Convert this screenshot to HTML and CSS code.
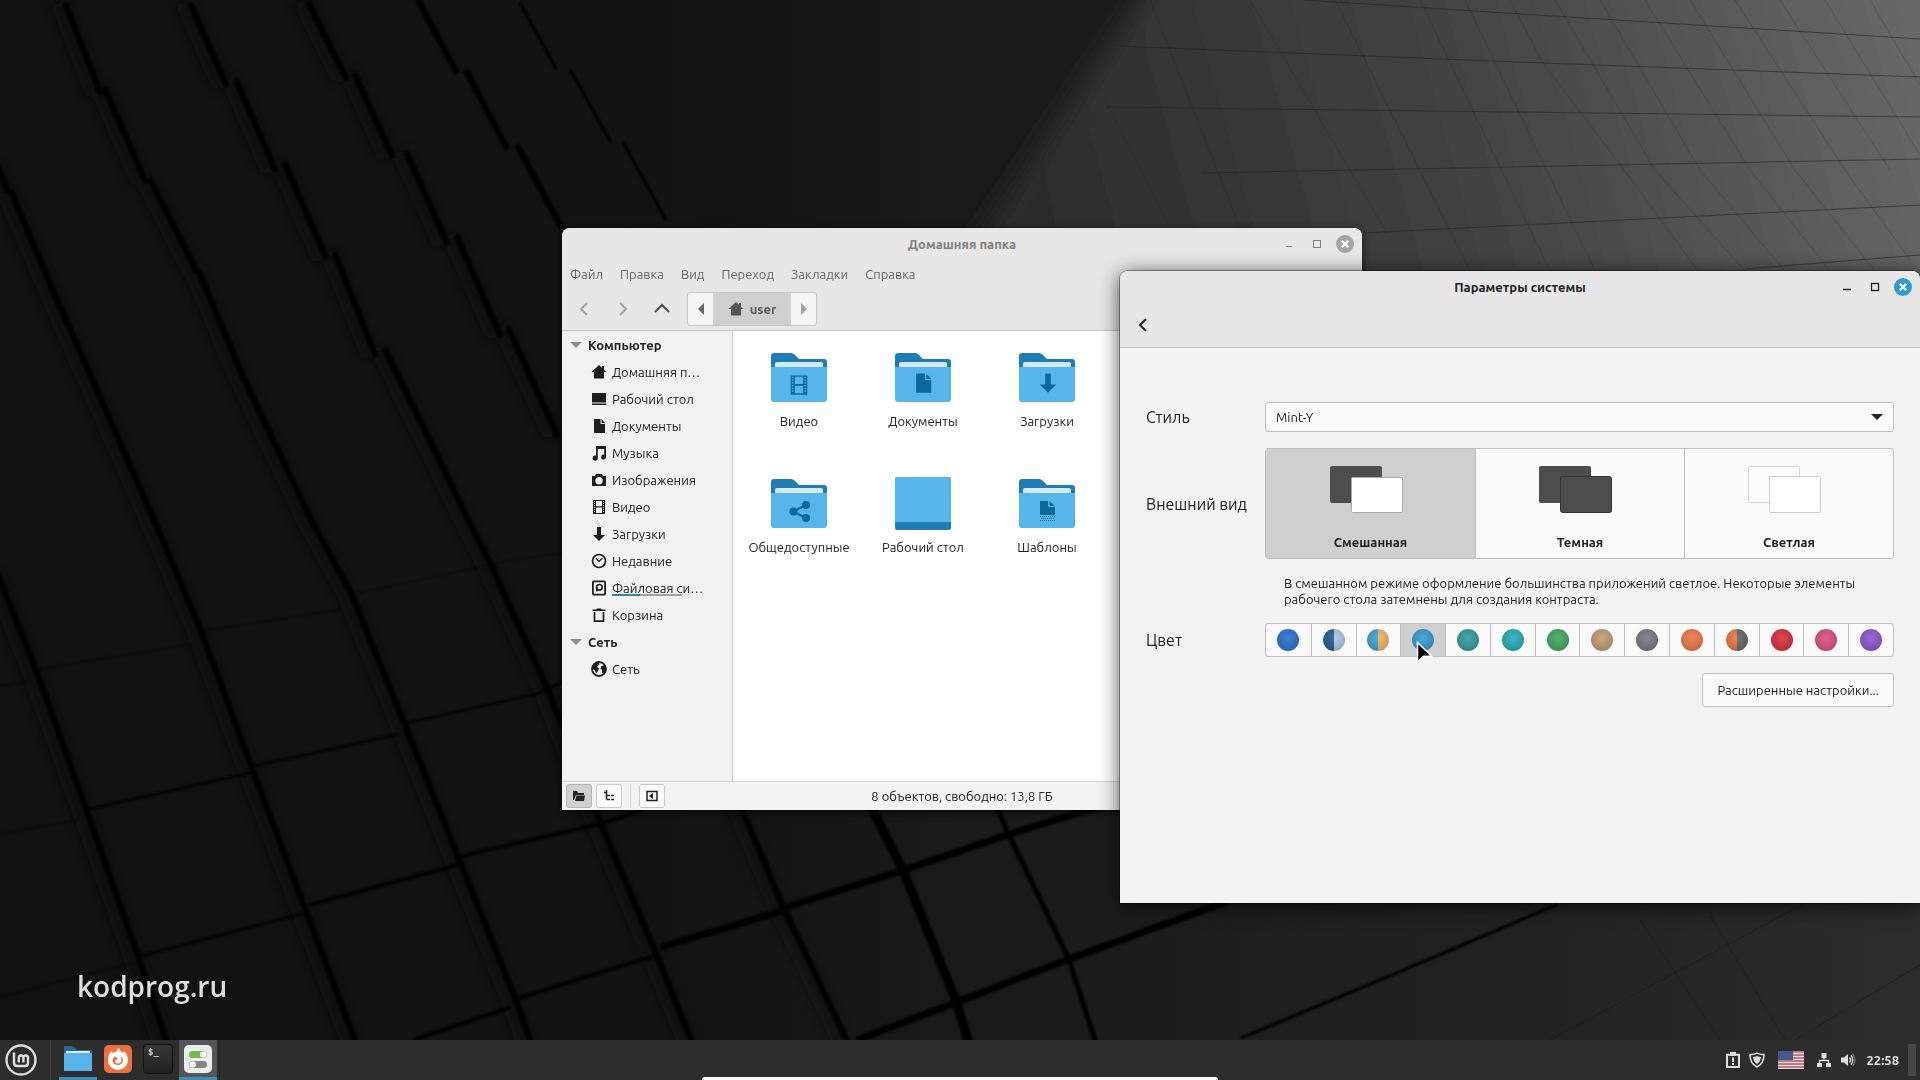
FILE: index.html
```html
<!DOCTYPE html>
<html lang="ru">
<head>
<meta charset="utf-8">
<meta name="viewport" content="width=device-width, initial-scale=1">
<title>Параметры системы</title>
<link rel="stylesheet" href="styles.css">
</head>
<body>
<svg class="defs" aria-hidden="true">
  <defs>
    <symbol id="home" viewBox="0 0 16 16"><path d="M8 1 .5 8H3v6.500h10V8h2.500L13 5.700V2h-2v1.800z"/></symbol>
    <symbol id="screen" viewBox="0 0 16 16"><path d="M1 2h14v9.500H1zM1 12.500h14V14H1z"/></symbol>
    <symbol id="doc" viewBox="0 0 16 16"><path d="M3 1h6.500v5H14v9H3zM10.500 1 14 5h-3.500z"/></symbol>
    <symbol id="music" viewBox="0 0 16 16"><path d="M5 1h10v11a2.400 2.400 0 1 1-1.800-2.300V4H6.800v9a2.600 2.600 0 1 1-1.800-2.400z"/></symbol>
    <symbol id="camera" viewBox="0 0 16 16"><path fill-rule="evenodd" d="M1 4h3l1-2h6l1 2h3v10H1zM8 5a3.700 3.700 0 1 0 0 7.400A3.700 3.700 0 0 0 8 5z"/></symbol>
    <symbol id="film" viewBox="0 0 16 16"><path fill-rule="evenodd" d="M2 1h12v14H2zM5 2v5.300h6V2zM5 8.600V14h6V8.600zM3 2v1h1V2zM3 4v1h1V4zM3 6v1h1V6zM3 8v1h1V8zM3 10v1h1v-1zM3 12v1h1v-1zM12 2v1h1V2zM12 4v1h1V4zM12 6v1h1V6zM12 8v1h1V8zM12 10v1h1v-1zM12 12v1h1v-1z"/></symbol>
    <symbol id="down" viewBox="0 0 16 16"><path d="M6 1h4v8h4l-6 6-6-6h4z"/></symbol>
    <symbol id="recent" viewBox="0 0 16 16"><circle cx="8" cy="8" r="6.500" fill="none" stroke="currentColor" stroke-width="1.700"/><path d="m5 5.500 3 2.800 3.500-3" fill="none" stroke="currentColor" stroke-width="1.300"/></symbol>
    <symbol id="disk" viewBox="0 0 16 16"><rect x="1.900" y="1.400" width="12.200" height="13.200" rx="1" fill="none" stroke="currentColor" stroke-width="1.800"/><circle cx="8.300" cy="7.300" r="2.800" fill="none" stroke="currentColor" stroke-width="1.600"/><path d="M5 7h1.500v4.500H5z"/></symbol>
    <symbol id="trash" viewBox="0 0 16 16"><path d="M1.500 2.500H5l1-1h4l1 1h3.500V4h-13z"/><path d="M3.500 5v9.200h9V5" fill="none" stroke="currentColor" stroke-width="1.700"/></symbol>
    <symbol id="globe" viewBox="0 0 16 16"><circle cx="8" cy="8" r="7" fill="none" stroke="currentColor" stroke-width="1.800"/><path d="M2 4 7 1.200 8.500 3 6 6l2 1.500L7 10l-2 2.500-1-3L1.500 8zM10.500 5 14 4l1 4-2 4.500-2-.5V9L9.500 7.500z"/></symbol>
    <symbol id="folder" viewBox="0 0 56 50">
      <path fill="#1f7db3" d="M0 3Q0 0 3 0h17q2 0 3.500 1.500L28 6h25q3 0 3 3v16H0z"/>
      <rect x="4" y="9" width="48" height="12" rx="2" fill="#d3e8f7"/>
      <path fill="#57b5ea" d="M0 14h56v32q0 3-3 3H3q-3 0-3-3z"/>
    </symbol>
    <symbol id="close" viewBox="0 0 18 18"><circle cx="9" cy="9" r="9"/><path d="m5.800 5.800 6.400 6.400m0-6.400-6.400 6.400" stroke="#fff" stroke-width="2.200"/></symbol>
  </defs>
</svg>

<main class="desktop">
  <svg class="wallpaper" viewBox="0 0 1920 1040" preserveAspectRatio="xMidYMid slice" aria-hidden="true">
    <defs>
      <linearGradient id="base" x1="0" y1="0" x2="1" y2="0"><stop offset="0" stop-color="#111"/><stop offset=".35" stop-color="#131313"/><stop offset=".52" stop-color="#1a1a1a"/><stop offset=".8" stop-color="#222"/><stop offset="1" stop-color="#2c2c2c"/></linearGradient>
      <linearGradient id="light" gradientUnits="userSpaceOnUse" x1="1020" y1="200" x2="1900" y2="-40"><stop offset="0" stop-color="#2b2b2b"/><stop offset=".5" stop-color="#434343"/><stop offset="1" stop-color="#686868"/></linearGradient>
      <filter id="soft" x="-10%" y="-10%" width="120%" height="120%"><feGaussianBlur stdDeviation="12"/></filter>
      <filter id="edge" filterUnits="userSpaceOnUse" x="-20" y="-20" width="1960" height="1080"><feGaussianBlur stdDeviation="1"/></filter>
      <filter id="haze" filterUnits="userSpaceOnUse" x="-20" y="-20" width="1960" height="1080"><feGaussianBlur stdDeviation="5"/></filter>
      <g id="grooves" fill="none">
        <path d="M68 3l36 92M107 87l42 96M152 178l48 94M201 270l45 107 68 143 40 73 53 130 54 134 57 141 18 50"/>
        <path d="M0 165l11 28M13 190l44 103 100 227 47 111 50 135 53 140 53 140"/>
        <path d="M0 573l39 97 50 139 52 147 30 90"/>
        <path d="M193 3l37 84M239 80l40 92M287 162l43 98M337 252l42 105M387 348l49 99 35 73 22 43 57 125 54 136 53 125 39 96"/>
        <path d="M311 2l39 78M357 73l39 85M409 152l42 93M459 235l45 102M511 328l50 109M743 805l43 102 66 138"/>
      </g>
    </defs>
    <rect width="1920" height="1040" fill="url(#base)"/>
    <path filter="url(#soft)" fill="url(#light)" d="M1180-80 1140 0 975 240 900 520H2000V-80z"/>
    <path stroke="#222" fill="none" opacity=".6" d="M1305 0 1505 13 1920 39M1117 46l426 17 377 14M1106 107l407 5 407 5M1202 173l718-14M1364 233l299-15 257-13M1745 269l175-14"/>
    <path stroke="#222" fill="none" opacity=".22" d="M1510 0l33 63 79 104 76 104M1555 0l100 170 90 101M1600 0l100 170 85 101M1645 0l105 170 80 101M1690 0l105 170 80 101M1735 0l110 170 65 90M1780 0l110 170M1825 0l95 155M1870 0l50 85M1465 0l130 271M1420 0l130 271M1335 0l135 271M1250 0l135 230M1150 0l90 228M1100 90l70 138"/>
    <use href="#grooves" x="-10" stroke="#080808" stroke-width="16" opacity=".5" filter="url(#haze)"/>
    <use href="#grooves" x="-3" stroke="#060606" stroke-width="6" filter="url(#edge)"/>
    <g fill="none" stroke="#060606" filter="url(#edge)">
      <path stroke-width="6" d="M418 0l39 73M466 70l41 79M517 145l46 85"/>
      <path stroke-width="9" d="M870 805l32 63 53 130 14 45"/>
      <path stroke-width="3" d="M520 3l37 67M570 69l41 74M623 142l43 78"/>
      <path stroke-width="5" d="M996 805l11 26 61 126 28 86"/>
      <path stroke-width="1" opacity=".6" d="M0 686l29-4M39 669l154-25M204 631l139-22M354 594l139-30M493 563l70-10M0 834l79-14M0 997l132-34"/>
      <path stroke-width="3" opacity=".8" d="M89 809l161-36M254 766l146-32M407 723l129-29 27-12M141 956l163-43"/>
      <path stroke-width="4" opacity=".9" d="M309 905l148-40M461 856l139-32 43-14M414 1040l97-33M518 998l136-42"/>
      <path stroke-width="7" d="M661 947l121-36M786 907l118-37 103-35 93-29M857 1040l100-38 107-41 164-60"/>
      <path stroke-width="3" d="M1241 1038l127-53 71-30 63-27 56-24"/>
    </g>
    <path d="M1550 1040l261-140M1795 1040l125-75M1640 920l80 120M1710 915l75 125" stroke="#181818" fill="none" opacity=".5"/>
  </svg>

  <p class="watermark">kodprog.ru</p>

  <section class="window files" aria-labelledby="files-title">
    <header class="window-head">
      <div class="titlebar">
        <h2 id="files-title">Домашняя папка</h2>
        <div class="window-buttons">
          <button type="button" aria-label="Свернуть"><svg width="18" height="18"><path d="M6 11.500h6" stroke="currentColor"/></svg></button>
          <button type="button" aria-label="Развернуть"><svg width="18" height="18"><rect x="5.500" y="5.500" width="7" height="7" fill="none" stroke="currentColor"/></svg></button>
          <button type="button" class="close" aria-label="Закрыть"><svg width="18" height="18"><use href="#close"/></svg></button>
        </div>
      </div>
      <nav class="menubar">
        <button type="button">Файл</button><button type="button">Правка</button><button type="button">Вид</button><button type="button">Переход</button><button type="button">Закладки</button><button type="button">Справка</button>
      </nav>
      <div class="toolbar">
        <div class="history">
          <button type="button" aria-label="Назад" class="dim"><svg width="16" height="16"><path d="m11 2-6 6 6 6"/></svg></button>
          <button type="button" aria-label="Вперёд" class="dim"><svg width="16" height="16"><path d="m5 2 6 6-6 6"/></svg></button>
          <button type="button" aria-label="Вверх"><svg width="16" height="16"><path d="m1 11 7-7 7 7"/></svg></button>
        </div>
        <div class="pathbar">
          <button type="button" aria-label="Левее"><svg width="8" height="12"><path d="M7 0v12L1 6z"/></svg></button>
          <button type="button" class="current"><svg width="16" height="16"><use href="#home"/></svg>user</button>
          <button type="button" aria-label="Правее" class="dim"><svg width="8" height="12"><path d="M1 0v12l6-6z"/></svg></button>
        </div>
      </div>
    </header>
    <div class="files-body">
      <nav class="places">
        <h3><svg width="12" height="6"><path d="M0 0h12L6 6z"/></svg>Компьютер</h3>
        <ul>
          <li><a href="#"><svg><use href="#home"/></svg>Домашняя п…</a></li>
          <li><a href="#"><svg><use href="#screen"/></svg>Рабочий стол</a></li>
          <li><a href="#"><svg><use href="#doc"/></svg>Документы</a></li>
          <li><a href="#"><svg><use href="#music"/></svg>Музыка</a></li>
          <li><a href="#"><svg><use href="#camera"/></svg>Изображения</a></li>
          <li><a href="#"><svg><use href="#film"/></svg>Видео</a></li>
          <li><a href="#"><svg><use href="#down"/></svg>Загрузки</a></li>
          <li><a href="#"><svg><use href="#recent"/></svg>Недавние</a></li>
          <li><a href="#"><svg><use href="#disk"/></svg><span class="usage">Файловая си…</span></a></li>
          <li><a href="#"><svg><use href="#trash"/></svg>Корзина</a></li>
        </ul>
        <h3><svg width="12" height="6"><path d="M0 0h12L6 6z"/></svg>Сеть</h3>
        <ul>
          <li><a href="#"><svg><use href="#globe"/></svg>Сеть</a></li>
        </ul>
      </nav>
      <div class="icon-view">
        <a href="#"><svg viewBox="0 0 56 50"><use href="#folder"/><use href="#film" x="17" y="21" width="22" height="22"/></svg>Видео</a>
        <a href="#"><svg viewBox="0 0 56 50"><use href="#folder"/><use href="#doc" x="17" y="19" width="22" height="22"/></svg>Документы</a>
        <a href="#"><svg viewBox="0 0 56 50"><use href="#folder"/><use href="#down" x="18" y="19" width="22" height="22"/></svg>Загрузки</a>
        <a href="#"><svg viewBox="0 0 56 50"><use href="#folder"/><path d="M35 26 22 32.500 35 39" fill="none" stroke="currentColor" stroke-width="2"/><circle cx="35" cy="26" r="4"/><circle cx="22.500" cy="32.500" r="4"/><circle cx="35" cy="39" r="4"/></svg>Общедоступные</a>
        <a href="#"><svg viewBox="0 0 56 50"><rect y="-2" width="56" height="53" rx="2" fill="#1f7db3"/><path d="M0 43V0q0-2 2-2h52q2 0 2 2v43z" fill="#57b5ea"/></svg>Рабочий стол</a>
        <a href="#"><svg viewBox="0 0 56 50"><use href="#folder"/><path d="M21 22h8v6h7v8H21zM30.500 22l5.500 5h-5.500z"/><path d="M21 37.500h15M22 39.500h14M21 41.500h15" stroke="currentColor" stroke-dasharray="1 1"/></svg>Шаблоны</a>
      </div>
    </div>
    <footer class="statusbar">
      <div class="view-toggles">
        <button type="button" class="on" aria-label="Места"><svg width="14" height="12"><path d="M1 1h4l1 2h6v2H4L2 10H1zM4.500 5.500H13L12 11H3z"/></svg></button>
        <button type="button" aria-label="Дерево"><svg width="14" height="12"><path d="M4.500 0v9.500M4 2.500H2M5 5.500h3M5 9.500h3M9 5.500h3M9 9.500h3" fill="none" stroke="currentColor" stroke-width="1.500"/></svg></button>
        <i class="divider"></i>
        <button type="button" aria-label="Боковая панель"><svg width="14" height="12"><rect x="2" y="1.500" width="10" height="9" fill="none" stroke="currentColor" stroke-width="1.500"/><path d="M8 3v6L4 6z"/></svg></button>
      </div>
      <p>8 объектов, свободно: 13,8 ГБ</p>
    </footer>
  </section>

  <section class="window settings" aria-labelledby="settings-title">
    <header class="window-head">
      <div class="titlebar">
        <h2 id="settings-title">Параметры системы</h2>
        <div class="window-buttons">
          <button type="button" aria-label="Свернуть"><svg width="18" height="18"><path d="M5 11.500h8" stroke="currentColor" stroke-width="1.500"/></svg></button>
          <button type="button" aria-label="Развернуть"><svg width="18" height="18"><rect x="5.500" y="5.500" width="7" height="7" fill="none" stroke="currentColor" stroke-width="1.300"/></svg></button>
          <button type="button" class="close" aria-label="Закрыть"><svg width="18" height="18"><use href="#close"/></svg></button>
        </div>
      </div>
      <div class="backbar">
        <button type="button" aria-label="Назад"><svg width="16" height="16"><path d="m11 2-6 6 6 6"/></svg></button>
      </div>
    </header>
    <form class="form">
      <label class="name" for="style">Стиль</label>
      <div class="select">
        <select id="style"><option>Mint-Y</option></select>
        <svg width="12" height="6"><path d="M0 0h12L6 6z"/></svg>
      </div>

      <span class="name" id="look">Внешний вид</span>
      <div class="looks" role="radiogroup" aria-labelledby="look">
        <label><input type="radio" name="look" checked><svg class="preview" viewBox="0 0 82 54"><rect width="52" height="37" rx="2" fill="#4d4d4d"/><rect x="21.500" y="11.500" width="51" height="35" rx="1" fill="#fff" stroke="#aaa"/></svg>Смешанная</label>
        <label><input type="radio" name="look"><svg class="preview" viewBox="0 0 82 54"><rect width="52" height="37" rx="2" fill="#4d4d4d"/><rect x="21.500" y="10.500" width="51" height="36" rx="2" fill="#4d4d4d" stroke="#333"/></svg>Темная</label>
        <label><input type="radio" name="look"><svg class="preview" viewBox="0 0 82 54"><rect x=".5" y=".5" width="51" height="36" rx="1" fill="#fcfcfc" stroke="#d2d2d2"/><rect x="21.500" y="10.500" width="51" height="36" rx="1" fill="#fff" stroke="#ccc"/></svg>Светлая</label>
      </div>

      <p class="hint">В смешанном режиме оформление большинства приложений светлое. Некоторые элементы рабочего стола затемнены для создания контраста.</p>

      <span class="name" id="color">Цвет</span>
      <div class="colors" role="radiogroup" aria-labelledby="color">
        <label class="blue"><input type="radio" name="color" aria-label="Синий"></label>
        <label class="navy"><input type="radio" name="color" aria-label="Тёмно-синий"></label>
        <label class="sand-blue"><input type="radio" name="color" aria-label="Песочно-голубой"></label>
        <label class="aqua"><input type="radio" name="color" aria-label="Голубой" checked></label>
        <label class="teal"><input type="radio" name="color" aria-label="Бирюзовый"></label>
        <label class="cyan"><input type="radio" name="color" aria-label="Циан"></label>
        <label class="green"><input type="radio" name="color" aria-label="Зелёный"></label>
        <label class="sand"><input type="radio" name="color" aria-label="Песочный"></label>
        <label class="grey"><input type="radio" name="color" aria-label="Серый"></label>
        <label class="orange"><input type="radio" name="color" aria-label="Оранжевый"></label>
        <label class="orange-grey"><input type="radio" name="color" aria-label="Оранжево-серый"></label>
        <label class="red"><input type="radio" name="color" aria-label="Красный"></label>
        <label class="pink"><input type="radio" name="color" aria-label="Розовый"></label>
        <label class="purple"><input type="radio" name="color" aria-label="Фиолетовый"></label>
      </div>

      <button type="button" class="advanced">Расширенные настройки...</button>
    </form>
  </section>

  <svg class="cursor" width="18" height="24" aria-hidden="true"><path d="M1.500 1.500v19.500l5.500-5.500 8.500-.5z" fill="#000" stroke="#fff" stroke-width="1.500"/></svg>
</main>

<footer class="panel">
  <div class="launchers">
    <button type="button" class="menu" aria-label="Меню"><svg width="32" height="32" viewBox="0 0 32 32"><g fill="none" stroke="currentColor" stroke-width="2.400"><circle cx="16" cy="16" r="14.500"/><path d="M9 8.500V19q0 3 3 3h8q3 0 3-3v-5q0-2.500-2.300-2.500T18.400 14v4.500M18.400 14q0-2.500-2.300-2.500T13.800 14v4.500"/></g></svg></button>
    <button type="button" class="open" aria-label="Файлы"><svg width="28" height="26" viewBox="0 0 28 26"><path fill="#1f6b96" d="M0 0h9l4 4h15v8H0z"/><path fill="#dbeefa" d="M2 5h24v3H2z"/><path fill="#57b5ea" d="M0 7h28v18H0z"/></svg></button>
    <button type="button" aria-label="Firefox"><svg width="28" height="28" viewBox="0 0 28 28"><rect width="28" height="28" rx="5" fill="#ee6e3d"/><path fill="#fff" d="M15 3q1 3 4 5l1-2q4 4 4 9a10 10 0 0 1-20 0q0-5 3-9l2 2q1-1 3-1 1-3 3-4z"/><path fill="#ee6e3d" d="M11 11q0 1.500 2 2 1.500.5 0 1.500-2 .5-2 2 1 2.500 3.500 2 3-1 3-3.500 0-2-2-3 3 0 3.500 3 0 4.500-4.500 5Q9 20 8.500 15.500 9 12 11 11z"/></svg></button>
    <button type="button" aria-label="Терминал"><span class="terminal">$_</span></button>
    <button type="button" class="open active" aria-label="Параметры"><svg width="28" height="28" viewBox="0 0 28 28"><rect width="28" height="28" rx="5" fill="#ececec"/><rect x="5" y="6" width="18" height="7" rx="3.500" fill="#72bd4d"/><rect x="16" y="6.500" width="6.500" height="6" rx="3" fill="#fff"/><rect x="5" y="16" width="18" height="7" rx="3.500" fill="#858585"/><rect x="5.500" y="16.500" width="6.500" height="6" rx="3" fill="#fff"/></svg></button>
  </div>
  <div class="tray">
    <svg width="16" height="16" viewBox="0 0 16 16"><path d="M2 2.800h12V15H2z" fill="none" stroke="currentColor" stroke-width="2"/><path d="M5 0h6v4H5zM7 5.500h2V10H7zM7 11h2v2H7z"/></svg>
    <svg width="16" height="16" viewBox="0 0 16 16"><path d="M8 1q3 2 7 1.500Q15 11.500 8 15 1 11.500 1 2.500 5 3 8 1z" fill="none" stroke="currentColor" stroke-width="1.500"/><path d="M8 4q2 1 4 1-.5 5-4 7-3.500-2-4-7 2 0 4-1z"/></svg>
    <svg class="flag" width="26" height="18" viewBox="0 0 26 18"><path fill="#e8e0e0" d="M0 0h26v18H0z"/><path d="M0 1h26M0 4h26M0 7h26M0 10h26M0 13h26M0 16h26" stroke="#b25562" stroke-width="1.500"/><path fill="#44598a" d="M0 0h15v9H0z"/></svg>
    <svg width="16" height="16" viewBox="0 0 16 16"><path d="M5.500 1h5v5h-5zM1 11h5v4H1zM10 11h5v4h-5z"/><path d="M8 6v2.500M3.500 11V8.500h9V11" fill="none" stroke="currentColor" stroke-width="1.300"/></svg>
    <svg width="16" height="16" viewBox="0 0 16 16"><path d="M1 5.500h3L8 2v12l-4-3.500H1z"/><path d="M9.500 5.500q2 2.500 0 5M11 3.500q3.500 4.500 0 9" fill="none" stroke="currentColor" stroke-width="1.300"/><path d="M12.800 2q4 6 0 12" fill="none" stroke="#777" stroke-width="1.300"/></svg>
    <time>22:58</time>
    <i class="show-desktop"></i>
  </div>
  <i class="overlay-bar"></i>
</footer>
</body>
</html>
```
FILE: styles.css
```css
* { box-sizing: border-box; }
body {
  margin: 0;
  min-height: 100vh;
  display: flex;
  flex-direction: column;
  overflow: hidden;
  background: #111;
  color: #222;
  font: 13px/16px Ubuntu, "Noto Sans", sans-serif;
}
h2, h3, p, ul { margin: 0; padding: 0; font-size: 13px; }
ul { list-style: none; }
button {
  margin: 0;
  padding: 0;
  border: 0;
  background: none;
  color: inherit;
  font: inherit;
}
a { color: inherit; text-decoration: none; }
svg { display: block; fill: currentColor; flex: none; }
.defs { position: absolute; width: 0; height: 0; }

.desktop { position: relative; flex: 1; overflow: hidden; }
.wallpaper { position: absolute; inset: 0; width: 100%; height: 100%; }
.watermark {
  position: absolute;
  left: 77px;
  bottom: 36px;
  color: #dedede;
  font: 600 28px/36px "Open Sans", "Noto Sans", sans-serif;
}
.cursor { position: absolute; left: 1416px; top: 641px; }

/* Windows */
.window {
  position: absolute;
  display: flex;
  flex-direction: column;
  width: 800px;
  border-radius: 8px 8px 0 0;
  background: #f3f3f3;
  overflow: hidden;
}
.files { left: 562px; top: 228px; box-shadow: 0 2px 8px #000a; }
.settings {
  left: 1120px;
  top: 271px;
  min-height: 632px;
  box-shadow: 0 0 0 1px #0005, 0 3px 20px #000b;
}
.window-head { background: #e7e7e7; border-bottom: 1px solid #c4c4c4; }
.titlebar {
  display: grid;
  grid-template-columns: 1fr auto 1fr;
  align-items: center;
  height: 32px;
  padding: 0 8px;
}
.titlebar h2 { grid-column: 2; }
.window-buttons { display: flex; justify-content: flex-end; gap: 10px; }
.files .window-head { color: #666; }
.files .titlebar { color: #808080; }
.files .close { color: #a4a4a4; }
.settings .close { color: #2f9bd1; }
.settings .titlebar { color: #222; }

.menubar { display: flex; gap: 17px; height: 28px; padding: 6px 8px; }
.toolbar { display: flex; gap: 6px; padding: 4px 2px; }
.history { display: flex; color: #4c4c4c; }
.history button { display: grid; place-items: center; width: 39px; }
.history svg, .backbar svg { fill: none; stroke: currentColor; stroke-width: 2; }
.toolbar .dim { color: #a2a2a2; }
.pathbar {
  display: flex;
  height: 34px;
  border: 1px solid #c4c4c4;
  border-radius: 3px;
  background: #f5f5f5;
}
.pathbar button { display: grid; place-items: center; width: 25px; }
.pathbar .current {
  display: flex;
  align-items: center;
  justify-content: center;
  gap: 6px;
  width: 78px;
  background: #cfcfcf;
  color: #565656;
  font-weight: bold;
}

.files-body { display: grid; grid-template-columns: 171px 1fr; min-height: 450px; background: #fff; }
.places { background: #f1f1f1; border-right: 1px solid #c9c9c9; }
.places h3 { display: flex; align-items: center; gap: 6px; height: 27px; padding-left: 8px; }
.places h3 svg { color: #8c8c8c; }
.places a { display: flex; align-items: center; gap: 5px; height: 27px; padding-left: 29px; }
.places a svg { width: 16px; height: 16px; color: #1e1e1e; }
.usage {
  background: linear-gradient(90deg, #2f86aa 28px, #a0a0a0 28px) 0 100% / 70px 2px no-repeat;
}
.icon-view {
  display: grid;
  grid-template-columns: repeat(3, 124px);
  grid-auto-rows: 126px;
  padding: 22px 4px;
}
.icon-view a { display: flex; flex-direction: column; align-items: center; gap: 10px; }
.icon-view svg { width: 56px; height: 50px; color: #0d679b; overflow: visible; }

.statusbar {
  display: grid;
  grid-template-columns: 1fr auto 1fr;
  align-items: center;
  padding: 2px 4px;
  border-top: 1px solid #d5d5d5;
  background: #f3f3f3;
}
.view-toggles { display: flex; gap: 4px; }
.view-toggles button {
  display: grid;
  place-items: center;
  width: 26px;
  height: 24px;
  border: 1px solid #cacaca;
  border-radius: 3px;
  background: #fbfbfb;
}
.view-toggles .on { background: #d0d0d0; border-color: #b5b5b5; }
.divider { width: 1px; margin: 0 4px; background: #d5d5d5; }

/* Appearance settings */
.backbar { display: flex; align-items: center; height: 44px; padding: 0 15px; }
.form {
  display: grid;
  grid-template-columns: 103px 1fr;
  align-items: center;
  gap: 16px;
  padding: 54px 26px 24px;
}
.name { font-size: 16px; line-height: 20px; white-space: nowrap; }
.select { display: grid; align-items: center; }
.select > * { grid-area: 1 / 1; }
.select select {
  appearance: none;
  height: 30px;
  padding: 0 10px;
  border: 1px solid #c0c0c0;
  border-radius: 3px;
  background: #fafafa;
  color: inherit;
  font: inherit;
}
.select svg { justify-self: end; margin-right: 11px; pointer-events: none; }
.looks, .colors {
  display: grid;
  border: 1px solid #bebebe;
  border-radius: 3px;
  background: #fafafa;
}
.looks { grid-template-columns: repeat(3, 1fr); }
.looks label {
  display: flex;
  flex-direction: column;
  align-items: center;
  gap: 14px;
  height: 109px;
  padding-top: 17px;
  font-weight: bold;
}
.looks label + label, .colors label + label { border-left: 1px solid #bebebe; }
.looks label:has(:checked), .colors label:has(:checked) { background: #cfcfcf; }
.looks input { position: absolute; opacity: 0; }
.preview { width: 82px; height: 54px; }
.hint { grid-column: 2; padding: 0 19px; }
.colors { grid-template-columns: repeat(14, 1fr); }
.colors label { display: grid; place-items: center; height: 32px; }
.colors input {
  appearance: none;
  width: 22px;
  height: 22px;
  margin: 0;
  border-radius: 50%;
  background: radial-gradient(circle at 50% 40%, #fff2, #0003 100%), linear-gradient(90deg, var(--a) 50%, var(--b, var(--a)) 50%);
}
.blue { --a: #216fd1; }
.navy { --a: #21578c; --b: #abc5e4; }
.sand-blue { --a: #38a1d7; --b: #eeb364; }
.aqua { --a: #3299cf; }
.teal { --a: #2f999d; }
.cyan { --a: #20aab5; }
.green { --a: #3ca65a; }
.sand { --a: #bf9a73; }
.grey { --a: #75757f; }
.orange { --a: #ee7340; }
.orange-grey { --a: #ee7340; --b: #626262; }
.red { --a: #d92b35; }
.pink { --a: #d94c7f; }
.purple { --a: #8954cc; }
.advanced {
  grid-column: 2;
  justify-self: end;
  height: 34px;
  padding: 0 14px;
  border: 1px solid #c0c0c0;
  border-radius: 3px;
  background: #fafafa;
}

/* Bottom panel */
.panel {
  position: relative;
  display: flex;
  justify-content: space-between;
  height: 40px;
  background: #2d2d2d;
  color: #dedede;
}
.launchers { display: flex; gap: 2px; padding-left: 5px; }
.launchers button { display: grid; place-items: center; width: 38px; border-bottom: 3px solid transparent; }
.launchers .menu {
  width: 46px;
  margin-right: 6px;
  justify-items: start;
  border-right: 1px solid #444;
  border-bottom: 0;
}
.launchers .open { border-bottom-color: #3b8dba; }
.launchers .active { background: #565656; }
.terminal {
  width: 30px;
  height: 30px;
  padding: 1px 4px;
  border: 1px solid #111;
  border-radius: 4px;
  background: linear-gradient(#383838, #222);
  font: bold 9px/12px "DejaVu Sans Mono", monospace;
  text-align: left;
}
.tray { display: flex; align-items: center; gap: 8px; padding-right: 4px; }
.tray .flag { margin: 0 4px 0 5px; }
.tray time { font-weight: bold; margin: 0 1px 0 2px; }
.show-desktop { width: 8px; height: 32px; background: #464646; }
.overlay-bar {
  position: absolute;
  left: 50%;
  bottom: 0;
  width: 516px;
  height: 3px;
  margin-left: -258px;
  border-radius: 4px 4px 0 0;
  background: #fff;
}
```
